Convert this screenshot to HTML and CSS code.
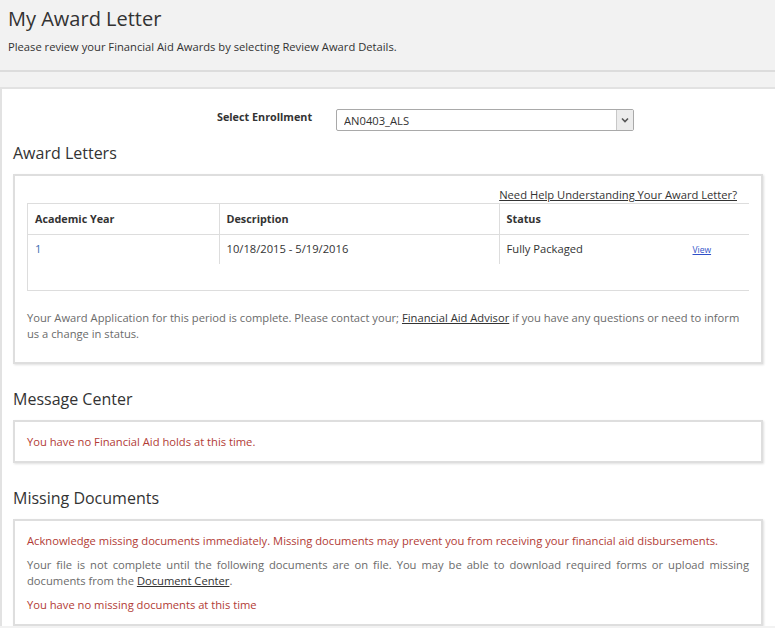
FILE: index.html
```html
<!DOCTYPE html>
<html lang="en">
<head>
    <meta charset="UTF-8">
    <meta name="viewport" content="width=device-width, initial-scale=1.0">
    <title>My Award Letter</title>
    <link rel="stylesheet" href="styles.css">
</head>
<body>
    <header class="page-header">
        <h1>My Award Letter</h1>
        <p>Please review your Financial Aid Awards by selecting Review Award Details.</p>
    </header>

    <main class="content">
        <div class="enrollment">
            <label for="enrollment">Select Enrollment</label>
            <div class="select-wrap">
                <select id="enrollment">
                    <option>AN0403_ALS</option>
                </select>
                <span class="select-arrow">
                    <svg width="8" height="6" viewBox="0 0 8 6"><path d="M1 1.5 L4 4.5 L7 1.5" fill="none" stroke="#555" stroke-width="1.6"/></svg>
                </span>
            </div>
        </div>

        <h2>Award Letters</h2>
        <div class="box">
            <div class="help-link"><a href="#">Need Help Understanding Your Award Letter?</a></div>
            <div class="table-wrap">
                <table class="awards">
                    <thead>
                        <tr>
                            <th class="col-year">Academic Year</th>
                            <th class="col-desc">Description</th>
                            <th>Status</th>
                        </tr>
                    </thead>
                    <tbody>
                        <tr>
                            <td class="year">1</td>
                            <td>10/18/2015 - 5/19/2016</td>
                            <td><span class="status-text">Fully Packaged</span><a href="#" class="view">View</a></td>
                        </tr>
                    </tbody>
                </table>
            </div>
            <p class="note">Your Award Application for this period is complete. Please contact your; <a href="#">Financial Aid Advisor</a> if you have any questions or need to inform us a change in status.</p>
        </div>

        <h2>Message Center</h2>
        <div class="box">
            <p class="alert">You have no Financial Aid holds at this time.</p>
        </div>

        <h2>Missing Documents</h2>
        <div class="box">
            <p class="alert">Acknowledge missing documents immediately. Missing documents may prevent you from receiving your financial aid disbursements.</p>
            <p class="note justify">Your file is not complete until the following documents are on file. You may be able to download required forms or upload missing documents from the <a href="#">Document Center</a>.</p>
            <p class="alert">You have no missing documents at this time</p>
        </div>
    </main>
</body>
</html>
```

FILE: styles.css
```css
* {
    margin: 0;
    padding: 0;
    box-sizing: border-box;
}

body {
    font-family: "Open Sans", Arial, sans-serif;
    font-size: 11.2px;
    line-height: 16px;
    color: #333;
    background: #f2f2f2;
}

a {
    color: #333;
}

.page-header {
    height: 72px;
    padding: 6px 8px 0;
    border-bottom: 2px solid #dcdcdc;
}

.page-header h1 {
    font-size: 20px;
    line-height: 26px;
    font-weight: 400;
    color: #333;
}

.page-header p {
    margin-top: 7px;
}

.content {
    margin-top: 15px;
    background: #fff;
    border-top: 2px solid #e2e2e2;
    border-left: 2px solid #e2e2e2;
    padding: 21px 12px 0 11px;
}

.enrollment {
    display: flex;
    align-items: flex-start;
    margin-left: 204px;
}

.enrollment label {
    font-weight: 700;
    font-size: 10.8px;
    width: 119px;
    margin-top: -1px;
}

.select-wrap {
    position: relative;
    width: 298px;
    height: 22px;
    margin-top: -1px;
}

.select-wrap select {
    appearance: none;
    -webkit-appearance: none;
    width: 100%;
    height: 22px;
    border: 1px solid #a9a9a9;
    border-radius: 2px;
    background: #fff;
    font-family: inherit;
    font-size: 11.2px;
    color: #333;
    padding: 0 7px;
}

.select-arrow {
    position: absolute;
    top: 1px;
    right: 1px;
    width: 17px;
    height: 20px;
    background: #ececec;
    border-left: 1px solid #c8c8c8;
    display: flex;
    align-items: center;
    justify-content: center;
}

h2 {
    font-size: 16px;
    line-height: 22px;
    font-weight: 400;
    color: #333;
    margin: 11px 0 10px;
}

.box + h2 {
    margin-top: 24px;
}

.box {
    background: #fff;
    border: 2px solid #dedede;
    box-shadow: 1px 1px 2px rgba(0, 0, 0, 0.12);
    padding: 12px 12px 11px;
}

.help-link {
    text-align: right;
    padding-right: 12px;
    margin-top: -1px;
    margin-bottom: 0;
}

.table-wrap {
    border-top: 1px solid #ddd;
    border-left: 1px solid #ddd;
    border-bottom: 1px solid #ddd;
    padding-bottom: 26px;
}

.awards {
    width: 100%;
    border-collapse: collapse;
}

.awards th,
.awards td {
    text-align: left;
    height: 30px;
    padding: 0 7px;
    vertical-align: middle;
}

.awards th {
    font-weight: 700;
    font-size: 10.8px;
    border-bottom: 1px solid #ddd;
}

.awards th + th,
.awards td + td {
    border-left: 1px solid #ddd;
}

.col-year {
    width: 191px;
}

.col-desc {
    width: 280px;
}

.year {
    color: #3a6bb0;
}

.status-text {
    display: inline-block;
    width: 186px;
}

.view {
    font-size: 8.5px;
    color: #3050c8;
}

.note {
    color: #6b6b6b;
}

.table-wrap + .note {
    margin-top: 19px;
    margin-bottom: 9px;
}

.justify {
    text-align: justify;
}

.alert {
    color: #b23b35;
}

.box p + p {
    margin-top: 8px;
}
```
